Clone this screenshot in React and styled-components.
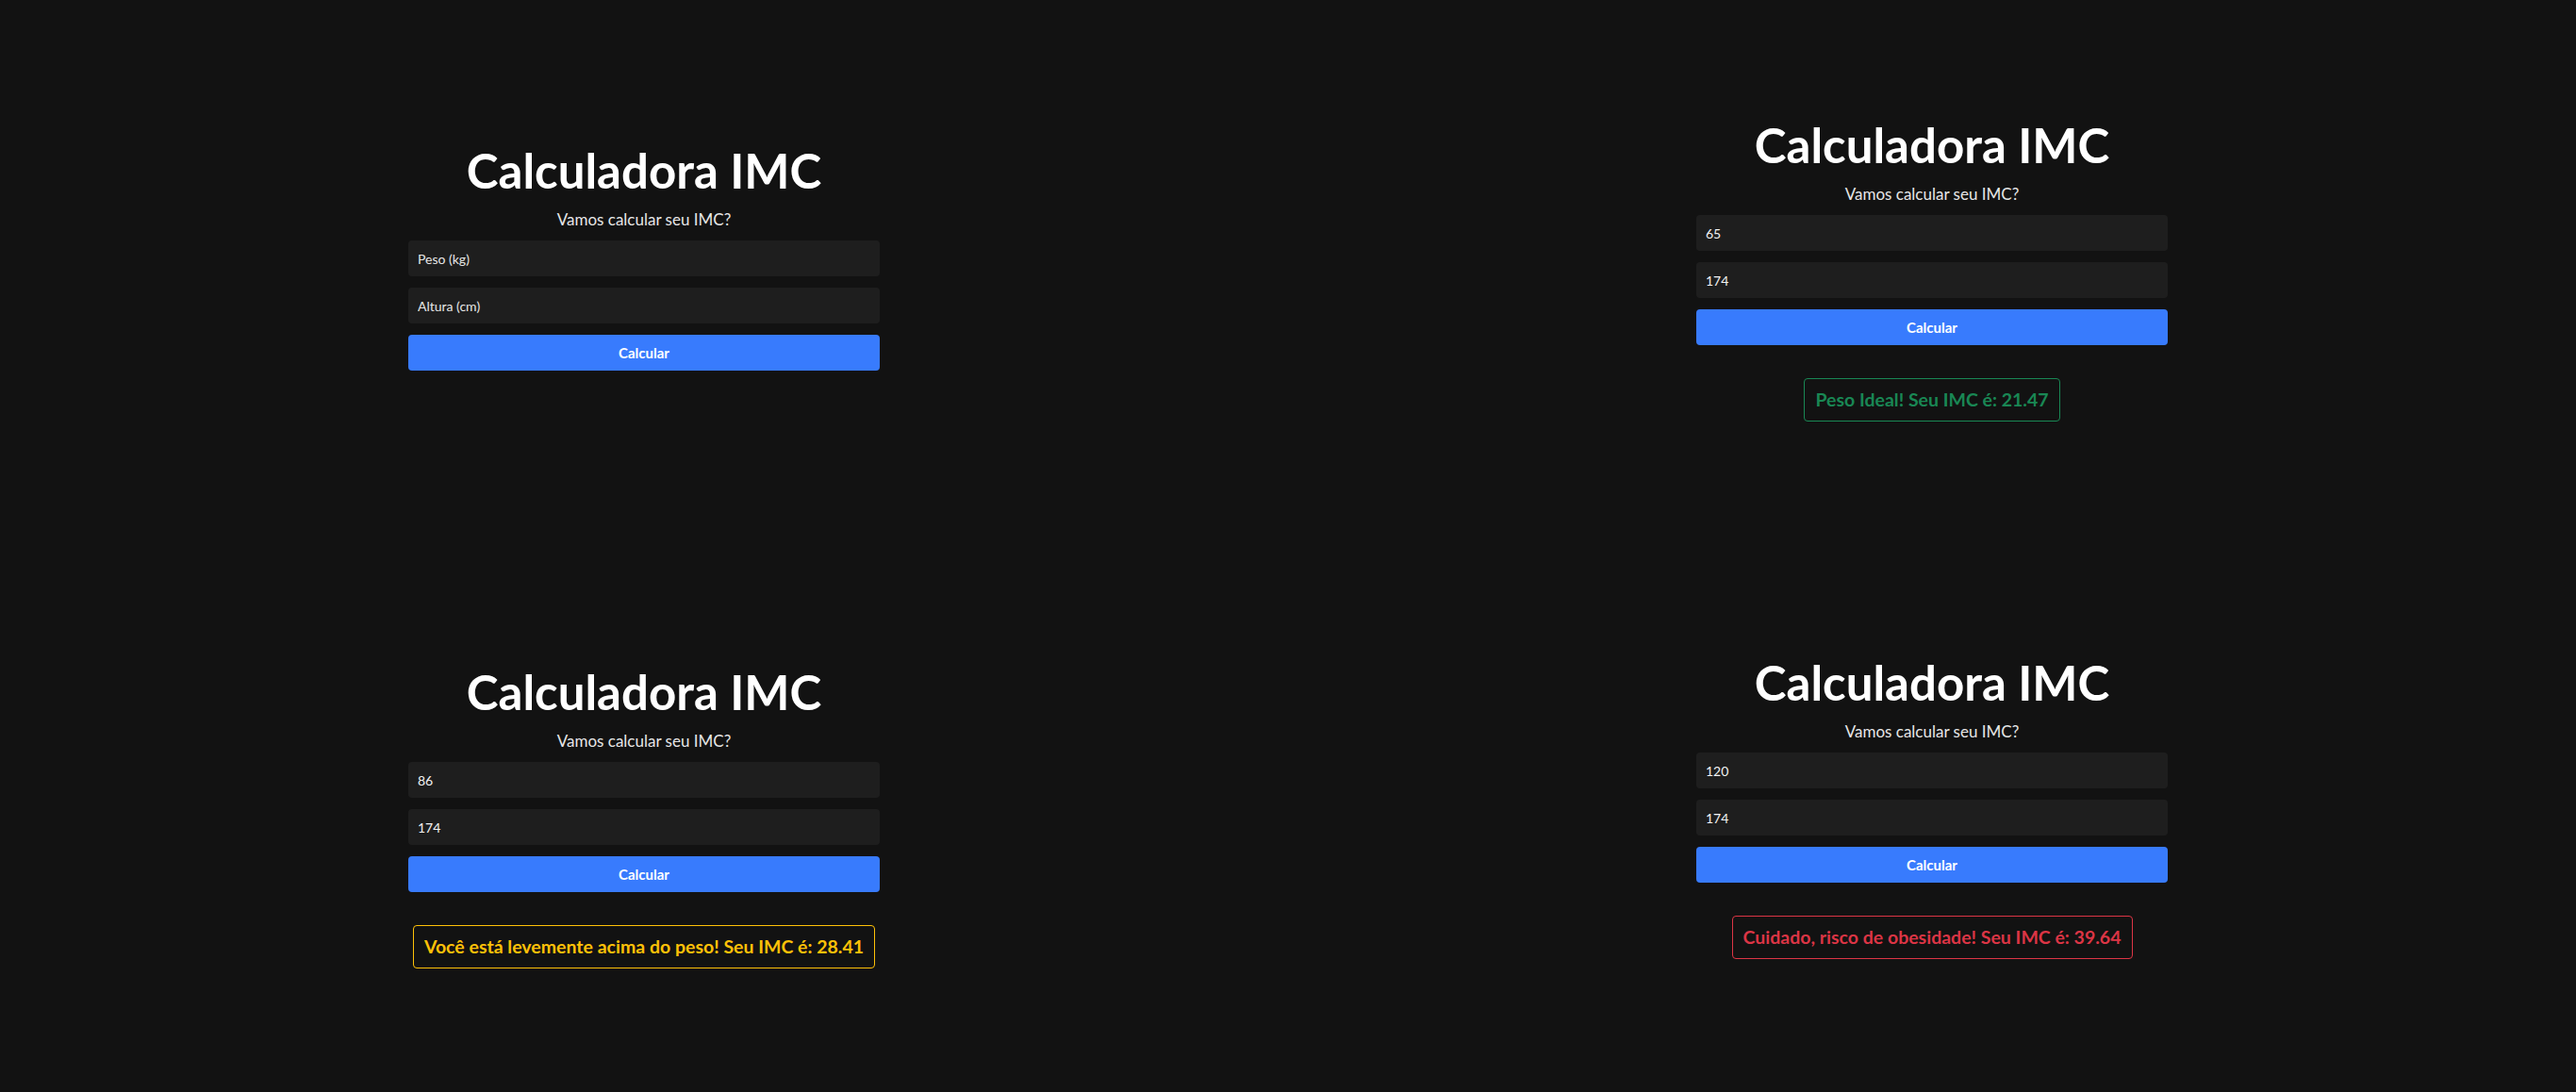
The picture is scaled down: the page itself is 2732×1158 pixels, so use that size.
import styled, { createGlobalStyle } from 'styled-components';

const GlobalStyle = createGlobalStyle`
	* {
		box-sizing: border-box;
	}
	body {
		margin: 0;
		background: #121212;
		font-family: Lato, 'Noto Sans', sans-serif;
		color: #fff;
	}
`;

const Page = styled.div`
	display: grid;
	grid-template-columns: 1366px 1366px;
	grid-template-rows: 579px 579px;
	width: 2732px;
	height: 1158px;
	overflow: hidden;
`;

const Cell = styled.div`
	display: flex;
	justify-content: center;
	align-items: flex-start;
	padding-top: ${(p) => p.$top}px;
`;

const Panel = styled.div`
	width: 500px;
	display: flex;
	flex-direction: column;
	align-items: stretch;
`;

const Title = styled.h1`
	margin: 0;
	font-size: 51px;
	line-height: 58px;
	font-weight: 700;
	text-align: center;
	color: #fff;
`;

const Subtitle = styled.p`
	margin: 13px 0 12px;
	font-size: 17px;
	line-height: 20px;
	text-align: center;
	color: #e6e6e6;
`;

const Form = styled.form`
	display: flex;
	flex-direction: column;
	gap: 12px;
`;

const Field = styled.input`
	height: 38px;
	border: none;
	border-radius: 4px;
	background: #1e1e1e;
	padding: 0 10px;
	font-family: inherit;
	font-size: 14px;
	color: #f2f2f2;
	outline: none;
	&::placeholder {
		color: #e6e6e6;
		opacity: 1;
	}
`;

const Button = styled.button`
	height: 38px;
	border: none;
	border-radius: 4px;
	background: #387bfd;
	color: #fff;
	font-family: inherit;
	font-size: 15px;
	font-weight: 700;
	cursor: pointer;
`;

const colors = {
	ok: '#198754',
	warn: '#ffc107',
	danger: '#dc3545',
};

const Result = styled.div`
	align-self: center;
	margin-top: 35px;
	padding: 10px 11px;
	border: 1px solid ${(p) => colors[p.$kind]};
	border-radius: 4px;
	color: ${(p) => colors[p.$kind]};
	font-size: 19.5px;
	line-height: 24px;
	font-weight: 700;
	white-space: nowrap;
`;

const screens = [
	{ top: 152, peso: '', altura: '' },
	{ top: 125, peso: '65', altura: '174', kind: 'ok', msg: 'Peso Ideal! Seu IMC é: 21.47' },
	{ top: 126, peso: '86', altura: '174', kind: 'warn', msg: 'Você está levemente acima do peso! Seu IMC é: 28.41' },
	{ top: 116, peso: '120', altura: '174', kind: 'danger', msg: 'Cuidado, risco de obesidade! Seu IMC é: 39.64' },
];

function Calculator({ peso, altura, kind, msg }) {
	return (
		<Panel>
			<Title>Calculadora IMC</Title>
			<Subtitle>Vamos calcular seu IMC?</Subtitle>
			<Form onSubmit={(e) => e.preventDefault()}>
				<Field type="number" placeholder="Peso (kg)" value={peso} readOnly />
				<Field type="number" placeholder="Altura (cm)" value={altura} readOnly />
				<Button type="submit">Calcular</Button>
			</Form>
			{msg && <Result $kind={kind}>{msg}</Result>}
		</Panel>
	);
}

export default function App() {
	return (
		<>
			<GlobalStyle />
			<Page>
				{screens.map((s, i) => (
					<Cell key={i} $top={s.top}>
						<Calculator {...s} />
					</Cell>
				))}
			</Page>
		</>
	);
}
